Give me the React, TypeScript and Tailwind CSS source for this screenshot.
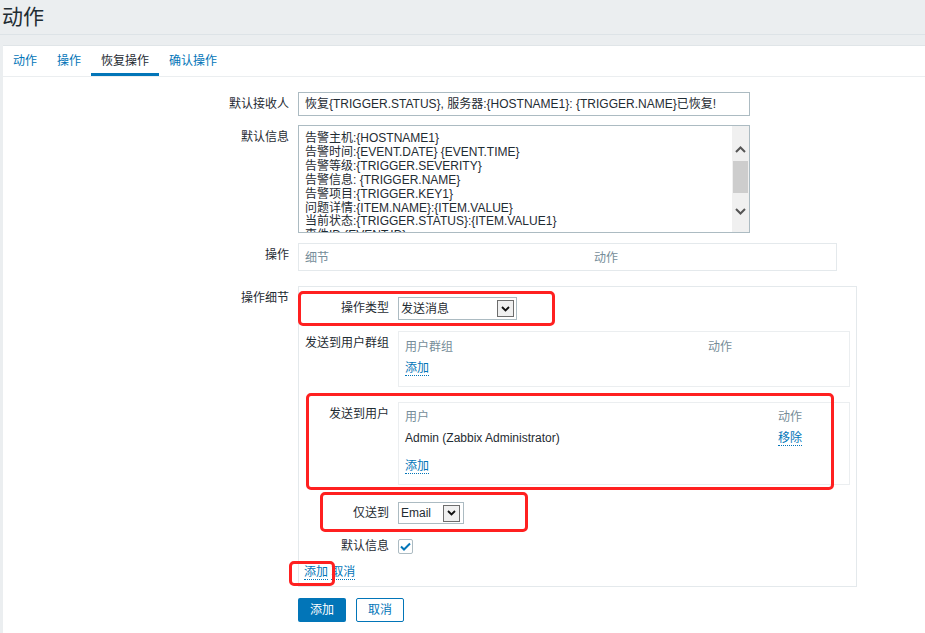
import React from "react";

const Chevron = ({ up = false }: { up?: boolean }) => (
  <svg width="11" height="7" viewBox="0 0 11 7">
    <polyline
      points={up ? "1,6 5.5,1.5 10,6" : "1,1 5.5,5.5 10,1"}
      fill="none"
      stroke="#555"
      strokeWidth="2"
    />
  </svg>
);

const SelectBtn = () => (
  <div className="w-[17px] h-[17px] bg-[#f0f0f0] border border-[#6d6d6d] flex items-center justify-center">
    <svg width="9" height="6" viewBox="0 0 9 6">
      <polyline points="1,1 4.5,4.5 8,1" fill="none" stroke="#111" strokeWidth="1.8" />
    </svg>
  </div>
);

const Link = ({ children }: { children: React.ReactNode }) => (
  <span className="text-[#0275b8] border-b border-dotted border-[#0275b8] leading-[15px]">{children}</span>
);

const Row = ({ label, children, className = "" }: { label: string; children: React.ReactNode; className?: string }) => (
  <div className={"flex " + className}>
    <div className="w-[286px] text-right leading-[24px] text-[#1f2c33] shrink-0">{label}</div>
    <div className="ml-[9px]">{children}</div>
  </div>
);

const InnerRow = ({ label, children, className = "", center = false }: { label: string; children: React.ReactNode; className?: string; center?: boolean }) => (
  <div className={"flex " + (center ? "items-center " : "") + className}>
    <div className={"w-[90px] text-right text-[#1f2c33] shrink-0 " + (center ? "leading-[15px]" : "leading-[24px]")}>{label}</div>
    <div className="ml-[9px]">{children}</div>
  </div>
);

const lines = [
  "告警主机:{HOSTNAME1}",
  "告警时间:{EVENT.DATE} {EVENT.TIME}",
  "告警等级:{TRIGGER.SEVERITY}",
  "告警信息: {TRIGGER.NAME}",
  "告警项目:{TRIGGER.KEY1}",
  "问题详情:{ITEM.NAME}:{ITEM.VALUE}",
  "当前状态:{TRIGGER.STATUS}:{ITEM.VALUE1}",
  "事件ID:{EVENT.ID}",
];

export default function App() {
  return (
    <div className="relative w-[925px] h-[633px] overflow-hidden bg-[#ebeef0] text-[12px] font-['Liberation_Sans','Noto_Sans_CJK_SC',sans-serif]">
      <div className="h-[35px] pl-[2px] flex items-center text-[21px] text-[#1f2c33] border-b border-[#dde3e7]">动作</div>
      <div className="mt-[10px] ml-[3px] bg-white h-[600px] border-t border-[#e0e5e8]">
        <div className="flex h-[31px] border-b border-[#ebeef0]">
          <div className="px-[10px] flex items-center text-[#0275b8]">动作</div>
          <div className="px-[10px] flex items-center text-[#0275b8]">操作</div>
          <div className="px-[10px] flex items-center text-[#1f2c33] border-b-[3px] border-[#0275b8] pt-[3px]">恢复操作</div>
          <div className="px-[10px] flex items-center text-[#0275b8]">确认操作</div>
        </div>

        <div className="pt-[15px]">
          <Row label="默认接收人">
            <div className="w-[452px] h-[24px] border border-[#acbbc2] px-[6px] flex items-center text-[#1f2c33] whitespace-nowrap">
              恢复{"{TRIGGER.STATUS}"}, 服务器:{"{HOSTNAME1}"}: {"{TRIGGER.NAME}"}已恢复!
            </div>
          </Row>

          <Row label="默认信息" className="mt-[9px]">
            <div className="w-[452px] h-[108px] border border-[#acbbc2] flex overflow-hidden">
              <div className="flex-1 pl-[6px] pt-[6px] text-[#1f2c33] leading-[13.9px] whitespace-nowrap overflow-hidden">
                {lines.map((l) => (
                  <div key={l}>{l}</div>
                ))}
              </div>
              <div className="w-[17px] bg-[#f0f0f0] flex flex-col items-center">
                <div className="h-[35px] flex items-center justify-center pt-[11px]">
                  <Chevron up />
                </div>
                <div className="w-[15px] h-[32px] bg-[#cdcdcd] mt-[0px]" />
                <div className="h-[30px] flex items-center justify-center pt-[6px]">
                  <Chevron />
                </div>
              </div>
            </div>
          </Row>

          <Row label="操作" className="mt-[10px]">
            <div className="w-[539px] h-[28px] border border-[#e4e9ec] flex items-center text-[#768d99] pt-[2px]">
              <div className="pl-[6px] w-[295px]">细节</div>
              <div>动作</div>
            </div>
          </Row>

          <Row label="操作细节" className="mt-[15px]">
            <div className="w-[559px] h-[301px] border border-[#e4e9ec] pt-[10px]">
              <InnerRow label="操作类型" center>
                <div className="w-[119px] h-[23px] border border-[#acbbc2] flex items-center justify-between pl-[2px] pr-[2px] text-[#1f2c33]">
                  <span>发送消息</span>
                  <SelectBtn />
                </div>
              </InnerRow>

              <InnerRow label="发送到用户群组" className="mt-[11px]">
                <div className="w-[452px] h-[56px] border border-[#ebeef0] px-[6px] pt-[7px]">
                  <div className="flex leading-[16px] text-[#768d99]">
                    <div className="w-[303px]">用户群组</div>
                    <div>动作</div>
                  </div>
                  <div className="mt-[5px] leading-[16px]">
                    <Link>添加</Link>
                  </div>
                </div>
              </InnerRow>

              <InnerRow label="发送到用户" className="mt-[15px]">
                <div className="w-[452px] h-[83px] border border-[#ebeef0] px-[6px] pt-[6px]">
                  <div className="flex leading-[16px] text-[#768d99]">
                    <div className="w-[373px]">用户</div>
                    <div>动作</div>
                  </div>
                  <div className="flex leading-[16px] mt-[5px] text-[#1f2c33]">
                    <div className="w-[373px]">Admin (Zabbix Administrator)</div>
                    <div><Link>移除</Link></div>
                  </div>
                  <div className="mt-[12px] leading-[16px]">
                    <Link>添加</Link>
                  </div>
                </div>
              </InnerRow>

              <InnerRow label="仅送到" className="mt-[17px]" center>
                <div className="w-[66px] h-[22px] border border-[#acbbc2] flex items-center justify-between pl-[2px] pr-[3px] text-[#1f2c33]">
                  <span>Email</span>
                  <SelectBtn />
                </div>
              </InnerRow>

              <InnerRow label="默认信息" className="mt-[15px]" center>
                <div className="w-[15px] h-[15px] border border-[#acbbc2] rounded-[2px] flex items-center justify-center">
                  <svg width="11" height="9" viewBox="0 0 11 9">
                    <polyline points="1,4.5 4,7.5 10,1.5" fill="none" stroke="#0275b8" strokeWidth="2" />
                  </svg>
                </div>
              </InnerRow>

              <div className="mt-[10px] pl-[5px] leading-[16px]">
                <Link>添加</Link> <Link>取消</Link>
              </div>
            </div>
          </Row>

          <Row label="" className="mt-[11px]">
            <div className="flex gap-[10px]">
              <div className="w-[48px] h-[24px] bg-[#0275b8] text-white flex items-center justify-center rounded-[2px]">添加</div>
              <div className="w-[48px] h-[24px] border border-[#0275b8] text-[#0275b8] bg-white flex items-center justify-center rounded-[2px]">取消</div>
            </div>
          </Row>
        </div>
      </div>

      <div className="absolute left-[298px] top-[291px] w-[257px] h-[35px] border-[3px] border-[#ff2020] rounded-[5px]" />
      <div className="absolute left-[306px] top-[393px] w-[528px] h-[97px] border-[3px] border-[#ff2020] rounded-[5px]" />
      <div className="absolute left-[320px] top-[492px] w-[208px] h-[40px] border-[3px] border-[#ff2020] rounded-[5px]" />
      <div className="absolute left-[289px] top-[561px] w-[46px] h-[25px] border-[3px] border-[#ff2020] rounded-[5px]" />
    </div>
  );
}
